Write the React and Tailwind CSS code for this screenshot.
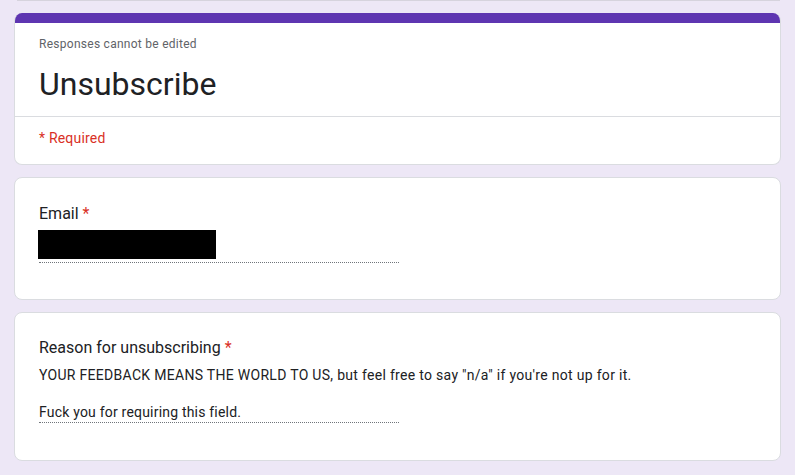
export default function App() {
  return (
    <div className="min-h-screen w-full bg-[#ede7f6] pb-10" style={{ fontFamily: "Roboto, 'Liberation Sans', sans-serif" }}>
      <div className="ml-[17px] mr-[15px] h-px bg-[#d6d3dd]" />
      <div className="mx-[14px] mt-[12px] flex flex-col gap-[12px]">
        {/* Header card */}
        <div className="overflow-hidden rounded-[8px] border border-[#dadce0] border-t-0 bg-white">
          <div className="h-[10px] bg-[#5e35b1]" />
          <div className="px-[24px] pt-[13px] pb-[12px]">
            <div className="text-[12px] leading-[16px] tracking-[0.27px] text-[#5f6368]">Responses cannot be edited</div>
            <div className="mt-[12px] text-[32px] leading-[40px] text-[#202124]">Unsubscribe</div>
          </div>
          <div className="h-px bg-[#dadce0]" />
          <div className="px-[24px] pt-[11px] pb-[16px] text-[14px] leading-[20px] tracking-[0.2px] text-[#d93025]">* Required</div>
        </div>

        {/* Email card */}
        <div className="rounded-[8px] border border-[#dadce0] bg-white px-[24px] pt-[24px] pb-[36px]">
          <div className="text-[16px] leading-[24px] text-[#202124]">
            Email<span className="ml-[4px] text-[#d93025]">*</span>
          </div>
          <div className="mt-[4px] w-[360px] border-b border-dotted border-[#70757a]">
            <div className="ml-[-1px] h-[29px] w-[178px] bg-black" />
            <div className="h-[3px]" />
          </div>
        </div>

        {/* Reason card */}
        <div className="rounded-[8px] border border-[#dadce0] bg-white px-[24px] pt-[23px] pb-[37px]">
          <div className="text-[16px] leading-[24px] text-[#202124]">
            Reason for unsubscribing<span className="ml-[4px] text-[#d93025]">*</span>
          </div>
          <div className="mt-[5px] text-[14px] leading-[20px] tracking-[0.3px] text-[#202124]">
            YOUR FEEDBACK MEANS THE WORLD TO US, but feel free to say "n/a" if you're not up for it.
          </div>
          <div className="mt-[17px] w-[360px] border-b border-dotted border-[#70757a] text-[14px] leading-[20px] tracking-[0.2px] text-[#202124]">
            Fuck you for requiring this field.
          </div>
        </div>
      </div>
    </div>
  );
}
